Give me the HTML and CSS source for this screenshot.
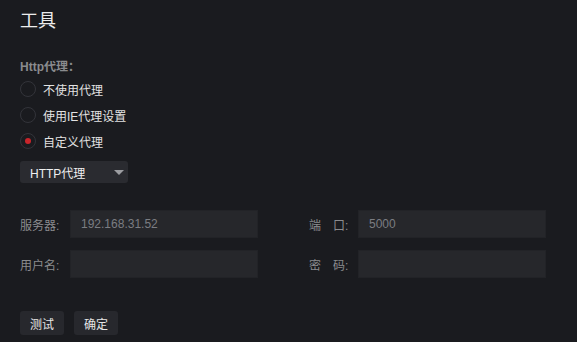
FILE: index.html
```html
<!doctype html>
<html>
<head>
    <meta charset="utf-8">
    <title>工具</title>
    <link rel="stylesheet" href="styles.css">
</head>
<body>
<div class="page">
    <h1 class="page-title">工具</h1>
    <div class="section-label">Http代理：</div>
    <div class="radio-list">
        <label class="radio"><span class="radio-dot"></span>不使用代理</label>
        <label class="radio"><span class="radio-dot"></span>使用IE代理设置</label>
        <label class="radio checked"><span class="radio-dot"></span>自定义代理</label>
    </div>
    <div class="select">
        <span>HTTP代理</span>
        <span class="select-arrow"></span>
    </div>
    <div class="form">
        <div class="field">
            <span class="field-label">服务器:</span>
            <div class="field-input">192.168.31.52</div>
        </div>
        <div class="field">
            <span class="field-label">端　口:</span>
            <div class="field-input">5000</div>
        </div>
        <div class="field">
            <span class="field-label">用户名:</span>
            <div class="field-input"></div>
        </div>
        <div class="field">
            <span class="field-label">密　码:</span>
            <div class="field-input"></div>
        </div>
    </div>
    <div class="buttons">
        <button class="btn">测试</button>
        <button class="btn">确定</button>
    </div>
</div>
</body>
</html>
```

FILE: styles.css
```css
body {margin: 0; padding: 0; background: #1a1b1f; font-family: 'Liberation Sans', 'Noto Sans CJK SC', sans-serif; font-size: 12px; color: #e2e2e2;}
.page {padding: 8px 20px 0 20px;}
.page-title {margin: 0; font-size: 18px; font-weight: normal; line-height: 26px; color: #ececec;}
.section-label {margin-top: 24px; line-height: 18px; font-weight: bold; color: #8a8b8e;}
.radio-list {display: flex; flex-direction: column;}
.radio {display: flex; align-items: center; height: 26px; gap: 7px;}
.radio-dot {width: 14px; height: 14px; border: 1px solid #33343a; border-radius: 50%; display: flex; align-items: center; justify-content: center;}
.radio.checked .radio-dot::after {content: ''; width: 6px; height: 6px; border-radius: 50%; background: #c9252b;}
.select {margin-top: 7px; width: 108px; height: 22px; box-sizing: border-box; padding: 0 4px 0 10px; background: #2a2b30; border-radius: 3px; display: flex; align-items: center; justify-content: space-between; color: #f0f0f0; font-size: 12px;}
.select-arrow {width: 0; height: 0; border-left: 5px solid transparent; border-right: 5px solid transparent; border-top: 5px solid #9c9da1;}
.form {margin-top: 27px; display: grid; grid-template-columns: 238px 237px; column-gap: 51px; row-gap: 12px;}
.field {display: flex; align-items: center;}
.field-label {width: 50px; flex: none; color: #8a8b8e;}
.field-input {flex: 1; height: 28px; box-sizing: border-box; background: #26272b; border: 1px solid #222327; padding: 0 10px; line-height: 26px; color: #7b7d82;}
.field:nth-child(2n) .field-label {width: 49px;}
.buttons {margin-top: 33px; display: flex; gap: 10px;}
.btn {width: 44px; height: 24px; padding: 0; border: none; border-radius: 3px; background: #27282d; color: #e6e6e6; font-family: inherit; font-size: 12px;}
```
